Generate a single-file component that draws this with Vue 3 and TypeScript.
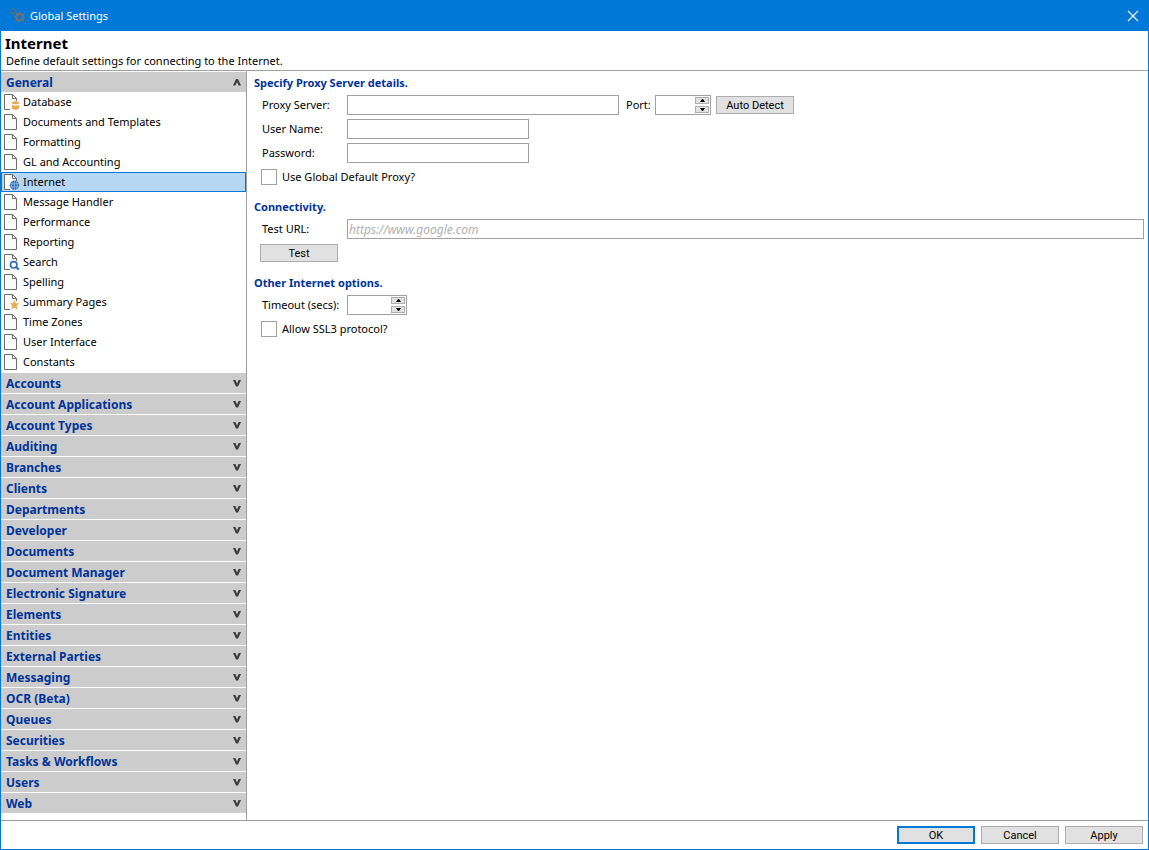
<script setup lang="ts">
import { ref } from 'vue'

type Badge = 'none' | 'database' | 'globe' | 'search' | 'star'
interface Page { name: string; badge: Badge }

const page = (name: string, badge: Badge = 'none'): Page => ({ name, badge })

const pages: Page[] = [
  page('Database', 'database'),
  page('Documents and Templates'),
  page('Formatting'),
  page('GL and Accounting'),
  page('Internet', 'globe'),
  page('Message Handler'),
  page('Performance'),
  page('Reporting'),
  page('Search', 'search'),
  page('Spelling'),
  page('Summary Pages', 'star'),
  page('Time Zones'),
  page('User Interface'),
  page('Constants'),
]

const groups: string[] = [
  'Accounts', 'Account Applications', 'Account Types', 'Auditing', 'Branches', 'Clients',
  'Departments', 'Developer', 'Documents', 'Document Manager', 'Electronic Signature',
  'Elements', 'Entities', 'External Parties', 'Messaging', 'OCR (Beta)', 'Queues',
  'Securities', 'Tasks & Workflows', 'Users', 'Web',
]

const selected = ref('Internet')
const generalOpen = ref(true)
const proxyServer = ref('')
const port = ref<number | ''>('')
const userName = ref('')
const password = ref('')
const useDefault = ref(false)
const testUrl = ref('')
const timeout = ref<number | ''>('')
const allowSsl3 = ref(false)

const step = (value: number | '', delta: number): number => Math.max(0, Number(value) + delta)
</script>

<template>
  <div class="window">
    <header class="titlebar">
      <svg class="gears" viewBox="0 0 16 16" aria-hidden="true">
        <g fill="none" stroke="#526f8a">
          <circle cx="4" cy="3.2" r="2.2" stroke-width="1.2" />
          <circle cx="4" cy="3.2" r="3.2" stroke-width="1" stroke-dasharray="1.2 1.31" />
        </g>
        <g fill="none" stroke="#6f7478">
          <circle cx="10.7" cy="9.2" r="3.2" stroke-width="1.8" />
          <circle cx="10.7" cy="9.2" r="4.8" stroke-width="1.5" stroke-dasharray="1.9 1.87" stroke-dashoffset="0.9" />
        </g>
      </svg>
      <span class="title">Global Settings</span>
      <button class="close" type="button" aria-label="Close">
        <svg viewBox="0 0 10 10" aria-hidden="true"><path d="M0 0L10 10M10 0L0 10" stroke="#fff" stroke-width="1.1" /></svg>
      </button>
    </header>

    <div class="intro">
      <h1>Internet</h1>
      <p>Define default settings for connecting to the Internet.</p>
    </div>

    <div class="body">
      <nav class="sidebar">
        <button class="group" type="button" :aria-expanded="generalOpen" @click="generalOpen = !generalOpen">
          <span>General</span>
          <svg class="chevron" viewBox="0 0 8 7" aria-hidden="true"><path d="M0 6.5H2.4L4 3L5.6 6.5H8L5 0H3Z" fill="#3c3c3c" /></svg>
        </button>
        <ul v-if="generalOpen" class="pages">
          <li v-for="p in pages" :key="p.name">
            <button type="button" class="page" :class="{ selected: p.name === selected }" @click="selected = p.name">
              <svg class="page-icon" viewBox="0 0 16 16" aria-hidden="true">
                <path d="M.5 .5H8.5L12.5 4.5V15.5H.5Z" fill="#fcfcfc" />
                <path v-if="p.badge === 'none'" d="M.5 .5H8.5L12.5 4.5V15.5H.5ZM8.5 .5V4.5H12.5" fill="none" stroke="#6d6d6d" />
                <path v-else d="M6 15.5H.5V.5H8.5L12.5 4.5V7M8.5 .5V4.5H12.5" fill="none" stroke="#6d6d6d" />
                <g v-if="p.badge === 'database'">
                  <path d="M7 7H16V16H7Z" fill="#fff" />
                  <ellipse cx="11.5" cy="8.8" rx="3.5" ry="1.5" fill="#e8aa4c" />
                  <path d="M8 10.8Q11.5 12.6 15 10.8V14.5Q11.5 17 8 14.5Z" fill="#e8aa4c" />
                </g>
                <g v-else-if="p.badge === 'globe'">
                  <circle cx="10.4" cy="11.3" r="4.7" fill="#2c68ad" />
                  <path d="M6 9.8H15M6 12.8H15M10.4 6.6V16M8.3 7.3Q6.8 11.3 8.3 15.3M12.5 7.3Q14 11.3 12.5 15.3" fill="none" stroke="#b5d7f3" stroke-width=".6" />
                </g>
                <g v-else-if="p.badge === 'search'">
                  <circle cx="9.7" cy="10.8" r="3.2" fill="#fff" stroke="#2f6eb5" stroke-width="1.7" />
                  <path d="M12 13L14.8 15.6" stroke="#2f6eb5" stroke-width="2" />
                </g>
                <g v-else-if="p.badge === 'star'">
                  <path d="M6 7H14V16H6Z" fill="#fff" />
                  <path d="M10.4 5.8L11.8 9.2H15.3L12.6 11.6L13.7 15.6L10.4 13.4L7.1 15.6L8.2 11.6L5.5 9.2H9Z" fill="#e8aa4c" />
                </g>
              </svg>
              <span>{{ p.name }}</span>
            </button>
          </li>
        </ul>
        <button v-for="g in groups" :key="g" class="group" type="button" aria-expanded="false">
          <span>{{ g }}</span>
          <svg class="chevron" viewBox="0 0 8 7" aria-hidden="true"><path d="M0 0H2.4L4 3.5L5.6 0H8L5 6.5H3Z" fill="#3c3c3c" /></svg>
        </button>
      </nav>

      <main class="content">
        <h2>Specify Proxy Server details.</h2>
        <div class="row">
          <label class="caption" for="proxy">Proxy Server:</label>
          <input id="proxy" v-model="proxyServer" class="box proxy" type="text" />
          <label class="port-caption" for="port">Port:</label>
          <div class="spin">
            <input id="port" v-model="port" class="box" type="number" min="0" />
            <div class="steps">
              <button type="button" aria-label="Increase port" @click="port = step(port, 1)">
                <svg viewBox="0 0 5 3" aria-hidden="true"><path d="M0 3L2 0H3L5 3Z" /></svg>
              </button>
              <button type="button" aria-label="Decrease port" @click="port = step(port, -1)">
                <svg viewBox="0 0 5 3" aria-hidden="true"><path d="M0 0L2 3H3L5 0Z" /></svg>
              </button>
            </div>
          </div>
          <button class="btn detect" type="button">Auto Detect</button>
        </div>
        <div class="row">
          <label class="caption" for="user">User Name:</label>
          <input id="user" v-model="userName" class="box credential" type="text" />
        </div>
        <div class="row">
          <label class="caption" for="pass">Password:</label>
          <input id="pass" v-model="password" class="box credential" type="password" />
        </div>
        <div class="row">
          <input id="default-proxy" v-model="useDefault" class="check" type="checkbox" />
          <label for="default-proxy">Use Global Default Proxy?</label>
        </div>

        <h2>Connectivity.</h2>
        <div class="row">
          <label class="caption" for="url">Test URL:</label>
          <input id="url" v-model="testUrl" class="box url" type="text" placeholder="https://www.google.com" />
        </div>
        <div class="row">
          <button class="btn" type="button">Test</button>
        </div>

        <h2>Other Internet options.</h2>
        <div class="row">
          <label class="caption" for="timeout">Timeout (secs):</label>
          <div class="spin wide">
            <input id="timeout" v-model="timeout" class="box" type="number" min="0" />
            <div class="steps">
              <button type="button" aria-label="Increase timeout" @click="timeout = step(timeout, 1)">
                <svg viewBox="0 0 5 3" aria-hidden="true"><path d="M0 3L2 0H3L5 3Z" /></svg>
              </button>
              <button type="button" aria-label="Decrease timeout" @click="timeout = step(timeout, -1)">
                <svg viewBox="0 0 5 3" aria-hidden="true"><path d="M0 0L2 3H3L5 0Z" /></svg>
              </button>
            </div>
          </div>
        </div>
        <div class="row">
          <input id="ssl3" v-model="allowSsl3" class="check" type="checkbox" />
          <label for="ssl3">Allow SSL3 protocol?</label>
        </div>
      </main>
    </div>

    <footer class="actions">
      <button class="btn primary" type="button">OK</button>
      <button class="btn" type="button">Cancel</button>
      <button class="btn" type="button">Apply</button>
    </footer>
  </div>
</template>

<style>
body {
  margin: 0;
  background: #fff;
}
</style>

<style scoped>
* {
  box-sizing: border-box;
}

.window {
  display: flex;
  flex-direction: column;
  min-height: 100vh;
  border: 1px solid #0078d7;
  background: #fff;
  color: #000;
  font: 11px/16px "Noto Sans", "Open Sans", sans-serif;
}

button,
input {
  margin: 0;
  padding: 0;
  border-radius: 0;
  color: inherit;
  font: inherit;
}

.titlebar {
  display: flex;
  align-items: center;
  height: 30px;
  padding: 0 0 0 8px;
  background: #0078d7;
  color: #fff;
}

.gears {
  width: 16px;
  height: 16px;
}

.title {
  flex: 1;
  padding-left: 5px;
}

.close {
  display: flex;
  align-items: center;
  justify-content: center;
  width: 30px;
  height: 30px;
  border: 0;
  background: none;
}

.close svg {
  width: 10px;
  height: 10px;
  overflow: visible;
}

.intro {
  height: 40px;
  padding: 3px 4px 0;
  border-bottom: 1px solid #a0a0a0;
}

h1 {
  margin: 0;
  font-size: 15px;
  line-height: 19px;
}

.intro p {
  margin: 0;
  padding-left: 1px;
}

.body {
  display: flex;
  flex: 1;
}

.sidebar {
  flex: none;
  width: 246px;
  border-right: 1px solid #a0a0a0;
}

.group {
  display: flex;
  align-items: center;
  justify-content: space-between;
  width: 100%;
  height: 20px;
  margin-top: 1px;
  padding: 0 5px;
  border: 0;
  background: #ccc;
  color: #003399;
  font-size: 12px;
  font-weight: 700;
  text-align: left;
}

.group span {
  padding-top: 2px;
}

.chevron {
  width: 8px;
  height: 7px;
}

.pages {
  margin: 0;
  padding: 0;
  list-style: none;
}

.page {
  display: flex;
  align-items: center;
  gap: 3px;
  width: 100%;
  height: 20px;
  padding: 0 2px;
  border: 1px solid transparent;
  background: none;
  text-align: left;
}

.page.selected {
  border-color: #0078d7;
  background: #b5d7f3;
}

.page-icon {
  width: 16px;
  height: 16px;
}

.content {
  flex: 1;
  min-width: 0;
  padding: 2px 4px 0 7px;
}

h2 {
  margin: 8px 0 0;
  color: #003399;
  font-size: 11px;
  line-height: 20px;
}

h2:first-child {
  margin-top: 0;
}

.row {
  display: flex;
  align-items: center;
  height: 24px;
  padding-left: 6px;
}

.caption {
  flex: none;
  width: 87px;
  padding-left: 2px;
  white-space: nowrap;
}

.box {
  height: 20px;
  padding: 0 1px;
  border: 1px solid #a0a0a0;
  background: #fff;
  outline: 0;
  font-size: 12px;
}

.box::placeholder {
  color: #b0b0b0;
  font-style: italic;
  opacity: 1;
}

.proxy {
  width: 272px;
}

.credential {
  width: 182px;
}

.url {
  flex: 1;
  min-width: 0;
}

.port-caption {
  width: 36px;
  padding-left: 7px;
}

.spin {
  position: relative;
  display: flex;
  width: 56px;
}

.spin.wide {
  width: 60px;
}

.spin .box {
  width: 100%;
  padding-right: 17px;
  appearance: textfield;
}

.steps {
  position: absolute;
  top: 2px;
  right: 2px;
  display: flex;
  flex-direction: column;
  gap: 2px;
}

.steps button {
  display: flex;
  align-items: center;
  justify-content: center;
  width: 14px;
  height: 7px;
  border: 1px solid #adadad;
  background: #e1e1e1;
}

.steps svg {
  width: 5px;
  height: 3px;
}

.check {
  appearance: none;
  width: 16px;
  height: 16px;
  margin: 0 5px 0 1px;
  border: 1px solid #a0a0a0;
  background: #fff;
}

.check:checked {
  border: 4px solid #fff;
  outline: 1px solid #a0a0a0;
  background: #333;
}

.btn {
  width: 78px;
  height: 18px;
  padding-top: 1px;
  border: 1px solid #adadad;
  background: #e1e1e1;
  font-family: Roboto, "Liberation Sans", sans-serif;
  line-height: 16px;
}

.btn.detect {
  margin-left: 5px;
}

.btn.primary {
  border: 2px solid #0078d7;
  line-height: 14px;
}

.actions {
  display: flex;
  align-items: center;
  justify-content: flex-end;
  gap: 6px;
  height: 29px;
  padding-right: 5px;
  border-top: 1px solid #a0a0a0;
}
</style>
